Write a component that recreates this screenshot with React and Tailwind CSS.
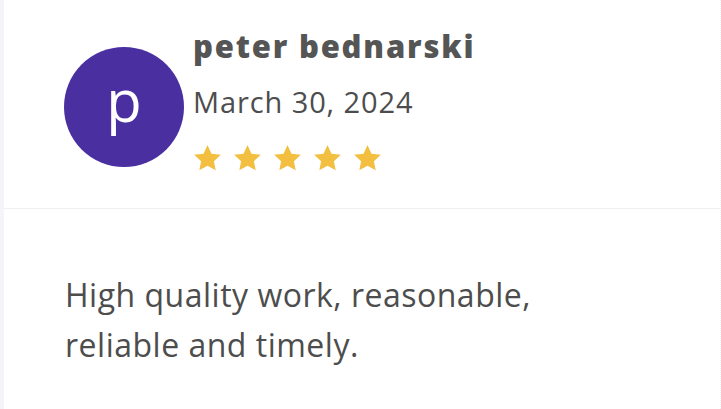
import React from "react";

function Star() {
  return (
    <svg width="29" height="28" viewBox="0 0 24 23" className="block">
      <path d="M12 0.8l3.3 7.1 7.7 0.9-5.7 5.3 1.5 7.6L12 17.9l-6.8 3.8 1.5-7.6L1 8.8l7.7-0.9z" fill="#f2bf41" />
    </svg>
  );
}

export default function App() {
  return (
    <div className="flex w-[721px] h-[409px] bg-white overflow-hidden">
      <div className="w-[4px] shrink-0 bg-[#f4f5f9]" />
      <div className="flex-1 flex flex-col border-r border-dotted border-[#f0f0f0]">
        <div className="h-[209px] shrink-0 border-b border-[#f0f0f3] flex items-start pl-[60px] pt-[26px]">
          <div className="mt-[21px] w-[120px] h-[120px] rounded-full bg-[#4a2fa0] flex items-center justify-center shrink-0">
            <span className="text-white text-[58px] leading-none font-['Open_Sans',sans-serif] -mt-[14px]">p</span>
          </div>
          <div className="ml-[9px] flex flex-col">
            <div className="text-[31px] leading-[40px] font-extrabold text-[#555555] font-['Open_Sans',sans-serif] tracking-[1.8px]">peter bednarski</div>
            <div className="mt-[18px] text-[29px] leading-[36px] text-[#4d4d4d] font-['Open_Sans',sans-serif] tracking-[0.9px]">March 30, 2024</div>
            <div className="mt-[24px] flex gap-[11px]">
              <Star /><Star /><Star /><Star /><Star />
            </div>
          </div>
        </div>
        <div className="pl-[61px] pt-[61px] text-[32px] leading-[50px] text-[#4d4d4d] font-['Open_Sans',sans-serif] tracking-[0.5px]">
          <div>High quality work, reasonable,</div>
          <div>reliable and timely.</div>
        </div>
      </div>
    </div>
  );
}
